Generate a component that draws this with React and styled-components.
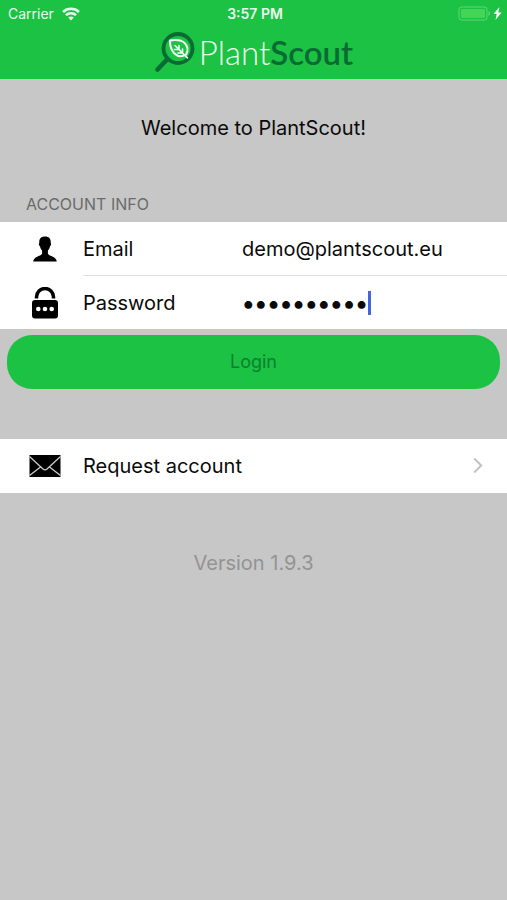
import React, { useState } from 'react';
import styled, { createGlobalStyle } from 'styled-components';

const App = () => {

  const [email, setEmail] = useState('demo@plantscout.eu');
  const [password, setPassword] = useState('demo123456');

  const onSubmit = (event) => event.preventDefault();

  return (
    <>
      <GlobalStyle />
      <Screen>
        <Header>
          <StatusBar>
            <Carrier>Carrier <WifiIcon /></Carrier>
            <Clock>3:57 PM</Clock>
            <Power><BatteryIcon /></Power>
          </StatusBar>
          <Brand>
            <LogoIcon />
            <BrandName>Plant<strong>Scout</strong></BrandName>
          </Brand>
        </Header>

        <main>
          <Welcome>Welcome to PlantScout!</Welcome>

          <form onSubmit={onSubmit}>
            <SectionTitle>ACCOUNT INFO</SectionTitle>
            <Group>
              <Row>
                <IconCell><UserIcon /></IconCell>
                <RowBody $divider>
                  <Label htmlFor="email">Email</Label>
                  <Input id="email" type="email" value={email} onChange={(e) => setEmail(e.target.value)} />
                </RowBody>
              </Row>
              <Row>
                <IconCell><LockIcon /></IconCell>
                <RowBody>
                  <Label htmlFor="password">Password</Label>
                  <PasswordInput id="password" type="password" value={password} onChange={(e) => setPassword(e.target.value)} />
                  <Caret />
                </RowBody>
              </Row>
            </Group>
            <LoginButton type="submit">Login</LoginButton>
          </form>

          <Group>
            <LinkRow href="#request">
              <IconCell><MailIcon /></IconCell>
              <LinkBody>Request account <ChevronIcon /></LinkBody>
            </LinkRow>
          </Group>

          <Version>Version 1.9.3</Version>
        </main>
      </Screen>
    </>
  );
};

const WifiIcon = () => (
  <svg width="18" height="14" viewBox="0 0 18 14" fill="none" stroke="#eafbee" strokeWidth="2.5">
    <path d="M1 5C5.500.8 12.500.8 17 5" />
    <path d="M3.900 8.200c2.900-2.700 7.300-2.700 10.200 0" />
    <path d="M6.200 10.500c1.700-1.400 3.900-1.400 5.600 0L9 13.500z" fill="#eafbee" stroke="none" />
  </svg>
);

const BatteryIcon = () => (
  <svg width="44" height="16" viewBox="0 0 44 16">
    <rect x="1" y="1" width="28" height="13" rx="2.500" fill="none" stroke="#62d67c" />
    <rect x="3" y="3" width="24" height="9" rx="1" fill="#45d556" />
    <path d="M30.500 5c2 .8 2 4.200 0 5z" fill="#62d67c" />
    <path d="M41.500 1l-6 7h3.200L37.500 14l6-7.500h-3.200z" fill="#fff" />
  </svg>
);

const LogoIcon = () => (
  <svg width="42" height="42" viewBox="0 0 42 42" fill="none" strokeLinecap="round">
    <circle cx="24" cy="17.500" r="14.500" stroke="#086b33" strokeWidth="3.800" />
    <path d="M13.500 28L3.500 38.500" stroke="#086b33" strokeWidth="4.600" />
    <g stroke="#f2fff4" strokeWidth="2" strokeLinejoin="round">
      <path d="M16 9.500c6-.9 11.500-.6 14.800 2.700 3.200 3.200 3.300 7.800 1.200 11.500-4 2.300-8.500 1.800-11.800-1.500C16.800 18.800 15.900 14.500 16 9.500z" />
      <path d="M21 14.500l12.500 12.500M25 14.500v4M28.500 18v4M20.500 18.500H25M24 22h4.500" strokeWidth="1.600" />
    </g>
  </svg>
);

const UserIcon = () => (
  <svg width="24" height="26" viewBox="0 0 24 26">
    <path d="M12 .5c4.200 0 6 2.400 5.700 6.200.8.900.2 3-.7 3.600-.4 2-1.100 3.300-2.100 4.300v3.200c1 2.200 8.700 2.900 8.900 7.700H.2c.2-4.800 7.900-5.500 8.900-7.700v-3.200c-1-1-1.700-2.300-2.100-4.300-.9-.6-1.500-2.700-.7-3.600C6 2.900 7.800.5 12 .5z" />
  </svg>
);

const LockIcon = () => (
  <svg width="28" height="32" viewBox="0 0 28 32">
    <path d="M5.500 11.500V10a8.500 8.500 0 0 1 17 0v1.500" fill="none" stroke="#000" strokeWidth="3.500" />
    <rect x="1" y="13" width="26" height="18.500" rx="3" />
    <circle cx="7.300" cy="22" r="2.300" fill="#fff" />
    <circle cx="14" cy="22" r="2.300" fill="#fff" />
    <circle cx="20.700" cy="22" r="2.300" fill="#fff" />
  </svg>
);

const MailIcon = () => (
  <svg width="32" height="22" viewBox="0 0 32 22">
    <rect x=".5" width="31" height="22" />
    <path d="M.5 1.500L14 14q2 1.600 4 0L31.500 1.500M.5 20.500L11.500 12M31.500 20.500L20.500 12" fill="none" stroke="#ccc" strokeWidth="1.300" />
  </svg>
);

const ChevronIcon = () => (
  <svg width="10" height="16" viewBox="0 0 10 16" fill="none" stroke="#c2c2c5" strokeWidth="2">
    <path d="M1.200 0.500l7 7-7 7" />
  </svg>
);

const GlobalStyle = createGlobalStyle`
  * {
    box-sizing: border-box;
  }

  body {
    margin: 0;
    background: #c7c7c7;
    color: #0a0a0a;
    font-family: Inter, "Liberation Sans", sans-serif;
    font-size: 20px;
    line-height: 24px;
  }

  svg {
    display: block;
    flex-shrink: 0;
  }
`;

const Screen = styled.div`
  min-height: 100vh;
  background: #c7c7c7;
`;

const Header = styled.header`
  background: #1bc243;
  padding-bottom: 3px;
`;

const StatusBar = styled.div`
  display: grid;
  grid-template-columns: 1fr auto 1fr;
  align-items: center;
  height: 28px;
  padding: 0 5px 0 8px;
  color: #eafbee;
  font-size: 14px;
  line-height: 16px;
`;

const Carrier = styled.span`
  display: flex;
  align-items: center;
  gap: 8px;
`;

const Clock = styled.span`
  font-weight: 600;
`;

const Power = styled.span`
  display: flex;
  justify-content: flex-end;
`;

const Brand = styled.div`
  display: flex;
  align-items: center;
  justify-content: center;
  gap: 3px;
  height: 48px;
`;

const BrandName = styled.span`
  color: #f2fff4;
  font-family: Lato, "Liberation Sans", sans-serif;
  font-size: 33px;
  font-weight: 300;
  line-height: 40px;

  strong {
    color: #086b33;
    font-weight: 600;
  }
`;

const Welcome = styled.h1`
  margin: 0;
  padding: 37px 16px 35px;
  font-size: 20px;
  font-weight: 400;
  text-align: center;
`;

const SectionTitle = styled.h2`
  margin: 0;
  padding: 19px 26px 8px;
  color: #6b6b6b;
  font-size: 16px;
  font-weight: 400;
  line-height: 20px;
`;

const Group = styled.div`
  background: #fff;
`;

const Row = styled.div`
  display: flex;
`;

const IconCell = styled.span`
  display: flex;
  align-items: center;
  justify-content: center;
  width: 32px;
  margin: 0 22px 0 29px;
  flex-shrink: 0;
`;

const RowBody = styled.div`
  box-sizing: content-box;
  display: flex;
  flex: 1;
  align-items: center;
  min-width: 0;
  min-height: 53px;
  border-bottom: ${(props) => (props.$divider ? '1px solid #dedee0' : '0')};
`;

const Label = styled.label`
  width: 159px;
  flex-shrink: 0;
`;

const Input = styled.input`
  flex: 1;
  min-width: 0;
  padding: 0;
  border: 0;
  outline: 0;
  background: transparent;
  color: inherit;
  font: inherit;
`;

const PasswordInput = styled(Input)`
  flex: none;
  field-sizing: content;
  font-size: 25px;
  font-weight: 600;
  caret-color: transparent;
`;

const Caret = styled.span`
  width: 3px;
  height: 24px;
  background: #4664e0;
`;

const LoginButton = styled.button`
  display: block;
  width: calc(100% - 14px);
  height: 54px;
  margin: 6px 7px 50px;
  border: 0;
  border-radius: 25px;
  background: #1bc243;
  color: #0b8030;
  font: inherit;
  font-size: 18px;
  cursor: pointer;
`;

const LinkRow = styled.a`
  display: flex;
  min-height: 54px;
  color: inherit;
  text-decoration: none;
`;

const LinkBody = styled.span`
  display: flex;
  flex: 1;
  align-items: center;
  justify-content: space-between;
  padding-right: 24px;
`;

const Version = styled.p`
  margin: 0;
  padding: 58px 16px;
  color: #939393;
  text-align: center;
`;

export default App;
